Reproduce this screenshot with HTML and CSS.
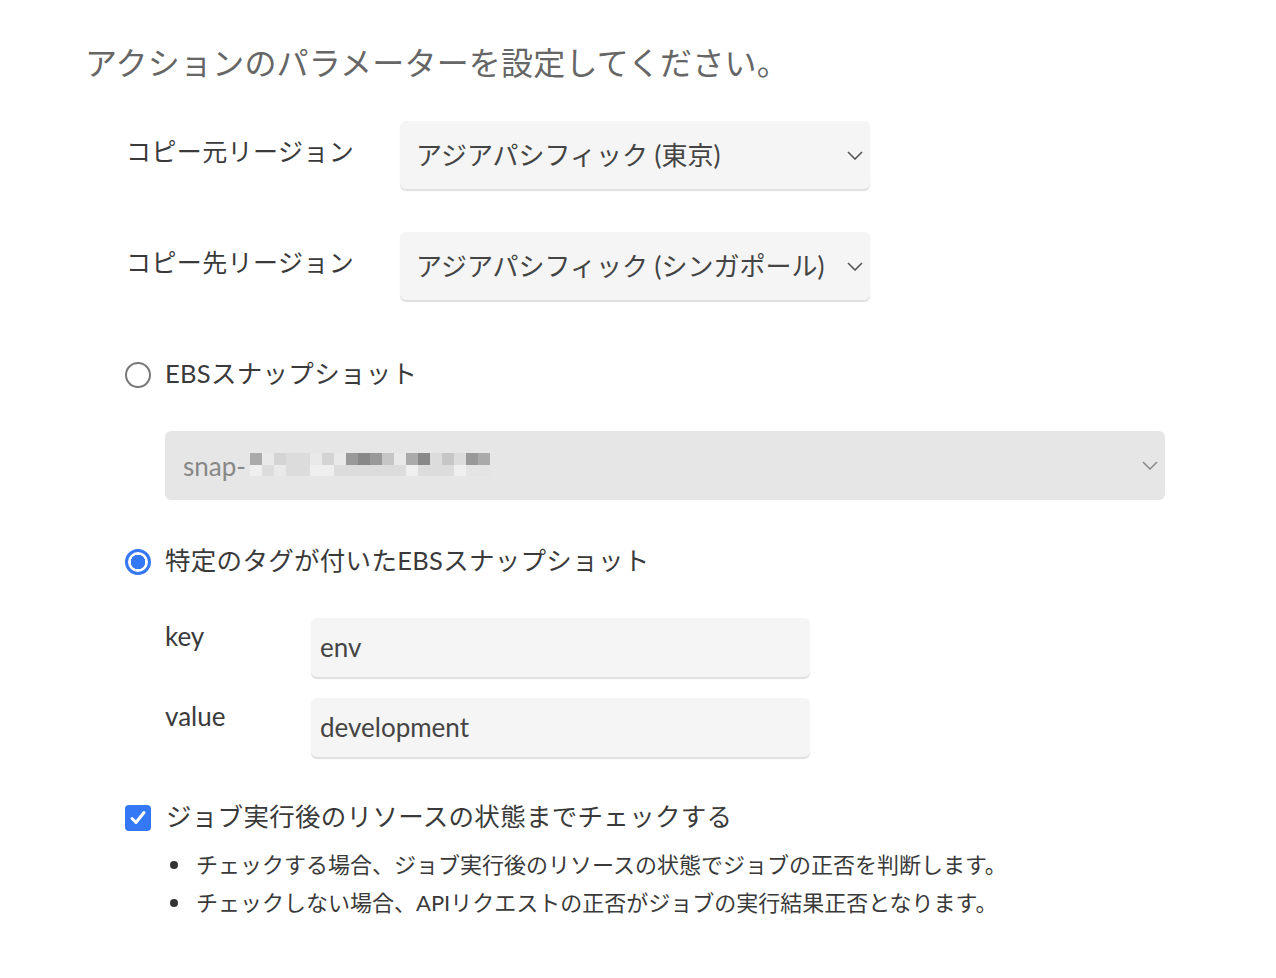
FILE: index.html
```html
<!DOCTYPE html>
<html lang="ja">
<head>
<meta charset="utf-8">
<title>アクションのパラメーター</title>
<link rel="stylesheet" href="styles.css">
</head>
<body>
<main class="page">
  <h1 class="title">アクションのパラメーターを設定してください。</h1>
  <div class="form">
    <div class="field-row">
      <label class="field-label">コピー元リージョン</label>
      <div class="select">
        <span>アジアパシフィック (東京)</span>
        <svg class="chevron" width="16" height="9" viewBox="0 0 16 9"><path d="M1 1 L8 8 L15 1" fill="none" stroke="#555" stroke-width="1.6"/></svg>
      </div>
    </div>
    <div class="field-row second">
      <label class="field-label">コピー先リージョン</label>
      <div class="select">
        <span>アジアパシフィック (シンガポール)</span>
        <svg class="chevron" width="16" height="9" viewBox="0 0 16 9"><path d="M1 1 L8 8 L15 1" fill="none" stroke="#555" stroke-width="1.6"/></svg>
      </div>
    </div>

    <div class="option first-option">
      <span class="radio"></span>
      <span class="option-text">EBSスナップショット</span>
    </div>
    <div class="snap-select">
      <span class="snap-text">snap-</span>
      <span class="pixels">
        <span class="px g1"></span><span class="px g5"></span><span class="px g3"></span><span class="px g4"></span><span class="px g4"></span><span class="px g5"></span><span class="px g3"></span><span class="px g5"></span><span class="px g0"></span><span class="px gA"></span><span class="px g0"></span><span class="px g2"></span><span class="px g5"></span><span class="px g1"></span><span class="px gA"></span><span class="px g4"></span><span class="px g2"></span><span class="px g4"></span><span class="px g0"></span><span class="px g1"></span>
        <span class="px g6"></span><span class="px g4"></span><span class="px g5"></span><span class="px g4"></span><span class="px g4"></span><span class="px g6"></span><span class="px g6"></span><span class="px g4"></span><span class="px g4"></span><span class="px g4"></span><span class="px g4"></span><span class="px g4"></span><span class="px g4"></span><span class="px g6"></span><span class="px g4"></span><span class="px g4"></span><span class="px g4"></span><span class="px g6"></span><span class="px g7"></span><span class="px g7"></span>
      </span>
      <svg class="chevron light" width="16" height="9" viewBox="0 0 16 9"><path d="M1 1 L8 8 L15 1" fill="none" stroke="#888" stroke-width="1.5"/></svg>
    </div>

    <div class="option second-option">
      <span class="radio checked"></span>
      <span class="option-text">特定のタグが付いたEBSスナップショット</span>
    </div>
    <div class="tag-row first-tag">
      <span class="tag-label">key</span>
      <div class="input">env</div>
    </div>
    <div class="tag-row second-tag">
      <span class="tag-label">value</span>
      <div class="input">development</div>
    </div>

    <div class="check-row">
      <span class="checkbox">
        <svg width="26" height="26" viewBox="0 0 26 26"><path d="M7 13.5 L11 17.5 L19 7.5" fill="none" stroke="#fff" stroke-width="3" stroke-linecap="round" stroke-linejoin="round"/></svg>
      </span>
      <span class="option-text">ジョブ実行後のリソースの状態までチェックする</span>
    </div>
    <ul class="notes">
      <li>チェックする場合、ジョブ実行後のリソースの状態でジョブの正否を判断します。</li>
      <li>チェックしない場合、APIリクエストの正否がジョブの実行結果正否となります。</li>
    </ul>
  </div>
</main>
</body>
</html>
```

FILE: styles.css
```css
* { box-sizing: border-box; }

html, body {
  margin: 0;
  padding: 0;
  background: #fff;
}

body {
  font-family: Lato, "Noto Sans CJK JP", sans-serif;
  color: #3a3a3a;
}

.page {
  padding: 43px 0 40px 85px;
}

.title {
  margin: 0;
  font-size: 32px;
  line-height: 40px;
  font-weight: 400;
  color: #666;
  letter-spacing: 0.2px;
}

.form {
  margin-top: 38px;
  margin-left: 40px;
}

.field-row {
  display: flex;
  align-items: flex-start;
}

.field-row.second {
  margin-top: 43px;
}

.field-label {
  width: 275px;
  padding-top: 12px;
  padding-left: 1px;
  font-size: 25px;
  line-height: 36px;
  letter-spacing: 0.4px;
  color: #3a3a3a;
}

.select {
  width: 470px;
  height: 68px;
  background: #f5f5f5;
  border-radius: 6px;
  box-shadow: 0 2px 1px rgba(0, 0, 0, 0.13);
  display: flex;
  align-items: center;
  justify-content: space-between;
  padding: 0 7px 3px 16px;
  font-size: 26px;
  color: #444;
}

.chevron {
  flex: none;
  display: block;
}

.select .chevron {
  margin-top: 3px;
}

.option {
  display: flex;
  align-items: center;
  gap: 14px;
  line-height: 36px;
}

.first-option {
  margin-top: 57px;
}

.second-option {
  margin-top: 44px;
}

.option-text {
  font-size: 25.5px;
  letter-spacing: 0.3px;
  color: #3a3a3a;
  position: relative;
  top: -2px;
}

.radio {
  width: 26px;
  height: 26px;
  border-radius: 50%;
  border: 2px solid #777;
  flex: none;
}

.radio.checked {
  border: 3px solid #3478f6;
  background: radial-gradient(circle, #3478f6 0 7px, #fff 7.5px);
}

.snap-select {
  margin-top: 38px;
  margin-left: 40px;
  width: 1000px;
  height: 69px;
  background: #e6e6e6;
  border-radius: 6px;
  display: flex;
  align-items: center;
  padding: 0 7px 0 18px;
}

.snap-text {
  font-size: 26px;
  color: #888;
  line-height: 30px;
}

.pixels {
  display: grid;
  grid-template-columns: repeat(20, 12px);
  grid-template-rows: 12px 11px;
  margin-top: -2px;
  margin-left: 4px;
  margin-right: auto;
}

.px { display: block; }
.g0 { background: #999; }
.gA { background: #888; }
.g1 { background: #aaa; }
.g2 { background: #c6c6c6; }
.g3 { background: #d4d4d4; }
.g4 { background: #dcdcdc; }
.g5 { background: #e9e9e9; }
.g6 { background: #efefef; }
.g7 { background: #e4e4e4; }

.tag-row {
  display: flex;
  align-items: flex-start;
  margin-left: 40px;
}

.first-tag { margin-top: 38px; }
.second-tag { margin-top: 21px; }

.tag-label {
  width: 146px;
  font-size: 26px;
  line-height: 36px;
  color: #3a3a3a;
}

.input {
  width: 499px;
  height: 59px;
  background: #f5f5f5;
  border-radius: 6px;
  box-shadow: 0 2px 1px rgba(0, 0, 0, 0.13);
  padding: 0 9px 1px;
  display: flex;
  align-items: center;
  font-size: 26px;
  color: #444;
}

.check-row {
  margin-top: 43px;
  display: flex;
  align-items: center;
  gap: 15px;
  line-height: 36px;
}

.checkbox {
  width: 26px;
  height: 26px;
  border-radius: 4px;
  background: #3478f6;
  flex: none;
  display: block;
}

.checkbox svg { display: block; }

.notes {
  list-style: none;
  margin: 10px 0 0;
  padding: 0 0 0 45px;
}

.notes li {
  position: relative;
  font-size: 22px;
  line-height: 38px;
  color: #3a3a3a;
  padding-left: 26px;
}

.notes li::before {
  content: "";
  position: absolute;
  left: 0;
  top: 15px;
  width: 8px;
  height: 8px;
  border-radius: 50%;
  background: #333;
}
```
